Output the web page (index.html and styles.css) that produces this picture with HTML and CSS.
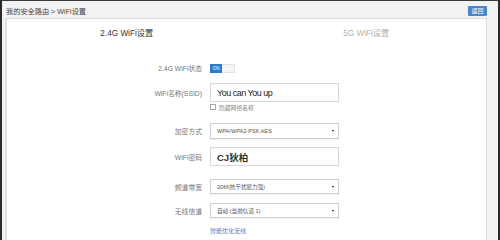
FILE: index.html
```html
<!DOCTYPE html>
<html>
<head>
	<meta charset="UTF-8">
	<title>WiFi设置</title>
	<link rel="stylesheet" href="styles.css">
</head>
<body>
<div id="ID_Frame">

	<div id="ID_Header">
		<span class="CLS_Crumb">我的安全路由 &gt; WiFi设置</span>
		<a class="CLS_Back">返回</a>
	</div>

	<div id="ID_Panel">
		<div id="ID_Tabs">
			<span class="CLS_Tab CLS_TabOn">2.4G WiFi设置</span>
			<span class="CLS_Tab">5G WiFi设置</span>
		</div>

		<div id="ID_Form">
			<div class="CLS_Row R_State">
				<label>2.4G WiFi状态</label>
				<span class="CLS_Switch"><b>ON</b><i></i></span>
			</div>
			<div class="CLS_Row R_Ssid">
				<label>WiFi名称(SSID)</label>
				<div class="CLS_Input CLS_Ssid">You can You up</div>
			</div>
			<div class="CLS_Row R_Hide">
				<label></label>
				<span class="CLS_Check"><i></i>隐藏网络名称</span>
			</div>
			<div class="CLS_Row R_Enc">
				<label>加密方式</label>
				<div class="CLS_Select">WPA/WPA2-PSK AES</div>
			</div>
			<div class="CLS_Row R_Pwd">
				<label>WiFi密码</label>
				<div class="CLS_Input CLS_Pwd">CJ狄柏</div>
			</div>
			<div class="CLS_Row R_Band">
				<label>频道带宽</label>
				<div class="CLS_Select">20M(抗干扰能力强)</div>
			</div>
			<div class="CLS_Row R_Chan">
				<label>无线信道</label>
				<div class="CLS_Select">自动 (当前信道 1)</div>
			</div>
			<div class="CLS_Row R_Link">
				<label></label>
				<a class="CLS_Link">智能优化无线</a>
			</div>
		</div>
	</div>

</div>
</body>
</html>
```

FILE: styles.css
```css
body {
	margin: 0;
	font-family: "Liberation Sans", "Noto Sans CJK SC", sans-serif;
	background: #f2f2f2;
}

#ID_Frame {
	height: 240px;
	box-sizing: border-box;
	border-top: 1px solid #3a3a3a;
	border-left: 2px solid #2a2a2a;
	border-right: 2px solid #2a2a2a;
	background: #f2f2f2;
	display: flex;
	flex-direction: column;
	overflow: hidden;
}

#ID_Header {
	height: 17px;
	box-sizing: border-box;
	padding: 3px 11px 0 4px;
	display: flex;
	align-items: center;
	justify-content: space-between;
}

.CLS_Crumb {
	font-size: 7.2px;
	color: #444;
}

.CLS_Back {
	width: 19px;
	height: 10px;
	line-height: 10px;
	text-align: center;
	font-size: 6px;
	color: #fff;
	background: #4b87c8;
	border-radius: 1px;
}

#ID_Panel {
	flex: 1;
	margin: 0 11px 0 3px;
	background: #fff;
	border: 1px solid #dedede;
	border-left-width: 2px;
	border-bottom: none;
}

#ID_Tabs {
	display: flex;
	height: 30px;
	line-height: 30px;
}

.CLS_Tab {
	flex: 1;
	text-align: center;
	font-size: 8.2px;
	color: #b0b0b0;
}

.CLS_TabOn {
	color: #333;
}

#ID_Form {
	display: flex;
	flex-direction: column;
}

.CLS_Row {
	display: flex;
	align-items: center;
	gap: 8px;
}

.CLS_Row label {
	width: 195px;
	text-align: right;
	font-size: 6.8px;
	color: #777;
}

.R_State { height: 10px; margin-top: 14px; }
.R_Ssid  { height: 19px; margin-top: 10px; }
.R_Hide  { height: 10px; }
.R_Enc   { height: 16px; margin-top: 11px; }
.R_Pwd   { height: 19px; margin-top: 8px; }
.R_Band  { height: 15px; margin-top: 13px; }
.R_Chan  { height: 15px; margin-top: 9px; }
.R_Link  { height: 10px; margin-top: 7px; }

.CLS_Switch {
	display: flex;
	height: 9px;
	width: 25px;
}

.CLS_Switch b {
	width: 12px;
	background: #2f7bcb;
	color: #fff;
	font-size: 4.5px;
	font-weight: normal;
	line-height: 9px;
	text-align: center;
}

.CLS_Switch i {
	flex: 1;
	background: #f4f4f4;
	border: 1px solid #e2e2e2;
	border-left: none;
}

.CLS_Input, .CLS_Select {
	width: 129px;
	height: 100%;
	box-sizing: border-box;
	border: 1px solid #d8d8d8;
	padding-left: 6px;
	display: flex;
	align-items: center;
}

.CLS_Input {
	color: #222;
	font-size: 9px;
}

.CLS_Ssid {
	letter-spacing: -0.5px;
}

.CLS_Pwd {
	font-size: 9.5px;
	font-weight: bold;
	color: #333;
}

.CLS_Select {
	position: relative;
	font-size: 5.6px;
	color: #555;
	border-color: #cfcfcf;
	box-shadow: 0 1px 1px rgba(0, 0, 0, 0.06);
}

.CLS_Select::after {
	content: "";
	position: absolute;
	right: 4px;
	top: 50%;
	margin-top: -1px;
	border-left: 1.5px solid transparent;
	border-right: 1.5px solid transparent;
	border-top: 2.5px solid #222;
}

.CLS_Check {
	display: flex;
	align-items: center;
	gap: 3px;
	font-size: 5.8px;
	color: #888;
}

.CLS_Check i {
	width: 4px;
	height: 4px;
	border: 1px solid #aaa;
}

.CLS_Link {
	font-size: 6px;
	color: #4a7fc1;
}
```
